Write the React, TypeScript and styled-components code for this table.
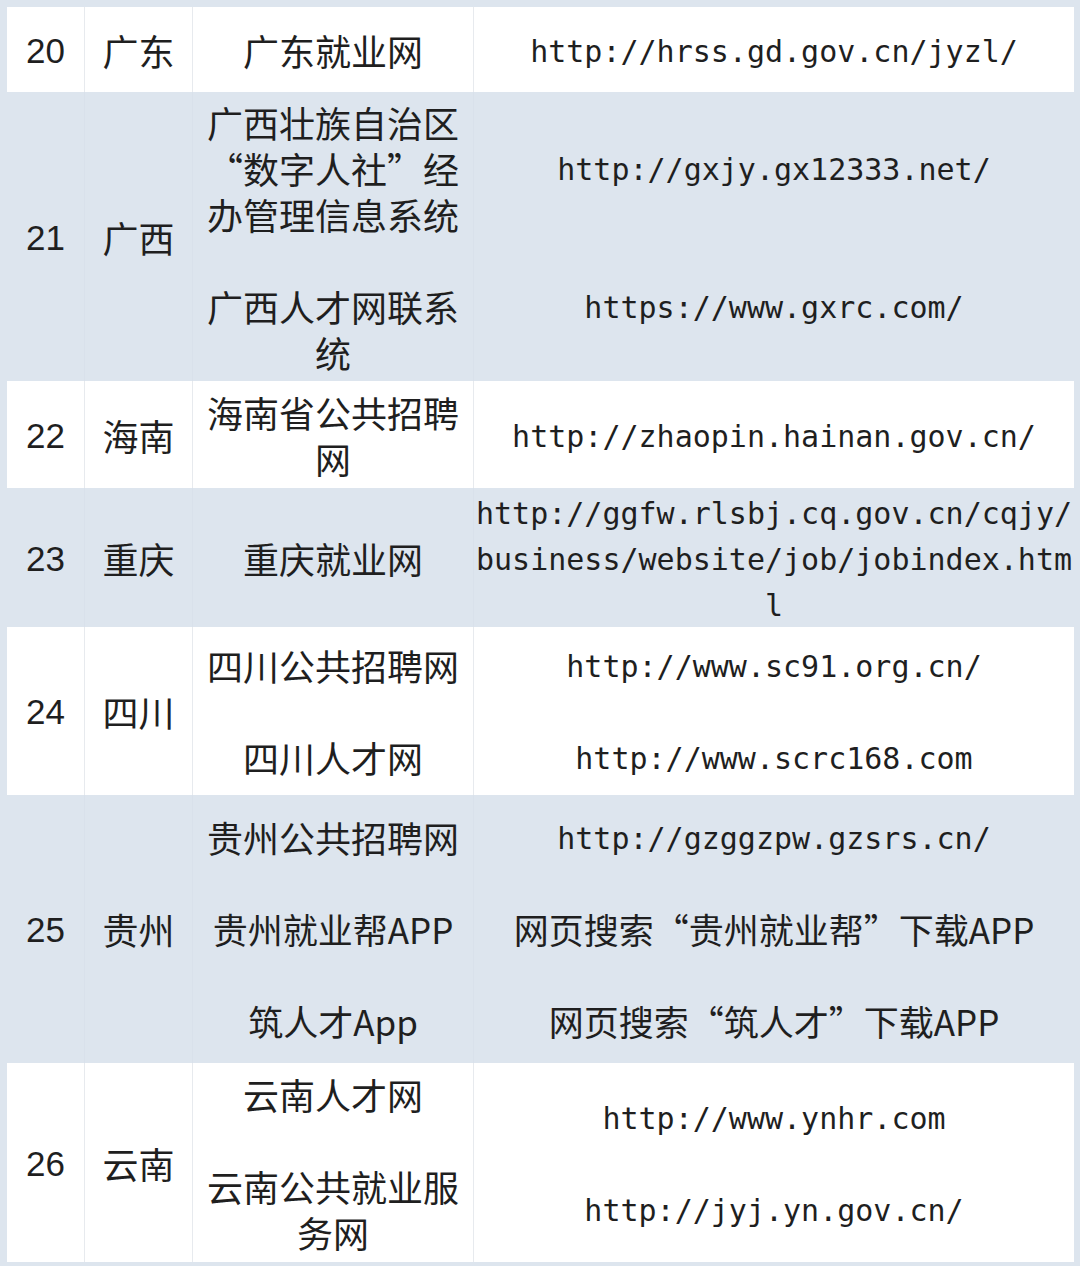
import React from 'react';
import styled, { createGlobalStyle } from 'styled-components';

const GlobalStyle = createGlobalStyle`
  html, body {
    margin: 0;
    padding: 0;
    background: #dde5ee;
  }
  body {
    font-family: "Noto Sans CJK SC", "Noto Sans", sans-serif;
    color: #1f1f1f;
  }
`;

// 整页（上、左、右各留一点底色）
const Page = styled.div`
  width: 1080px;
  height: 1266px;
  box-sizing: border-box;
  padding: 7px 6px 0 7px;
  background: #dde5ee;
  overflow: hidden;
`;

const Table = styled.div`
  display: flex;
  flex-direction: column;
`;

// 一个省份一行，白/蓝交替
const Row = styled.div<{ $h: number; $shaded: boolean }>`
  display: grid;
  grid-template-columns: 78px 108px 281px 600px;
  height: ${p => p.$h}px;
  background: ${p => (p.$shaded ? '#dde5ee' : '#ffffff')};
  --line: ${p => (p.$shaded ? '#d9e1eb' : '#e7eaee')};
`;

const Cell = styled.div`
  display: flex;
  flex-direction: column;
  align-items: center;
  justify-content: center;
  text-align: center;
  border-right: 1px solid var(--line);
  &:last-child {
    border-right: none;
  }
`;

const Num = styled.span`
  font-family: "Liberation Sans", Arial, sans-serif;
  font-size: 35px;
  line-height: 46px;
  padding-top: 2px;
`;

const Prov = styled.span`
  font-size: 36px;
  line-height: 46px;
`;

// 单元格里的一行文字（空行也占一行高度）
const Line = styled.span<{ $mono?: boolean; $small?: boolean }>`
  display: block;
  box-sizing: border-box;
  height: 46px;
  line-height: ${p => (p.$mono ? '42px' : '46px')};
  padding-top: ${p => (p.$mono ? '4px' : '0')};
  white-space: pre;
  font-family: ${p =>
    p.$mono
      ? '"DejaVu Sans Mono", "Liberation Mono", monospace'
      : '"Noto Sans CJK SC", "Noto Sans", sans-serif'};
  font-size: ${p => (p.$mono ? '30px' : p.$small ? '35px' : '36px')};
`;

type Entry = {
  no: string;
  prov: string;
  h: number;
  shaded: boolean;
  names: string[];
  urls: string[];
};

const rows: Entry[] = [
  { no: '20', prov: '广东', h: 85, shaded: false, names: ['广东就业网'], urls: ['http://hrss.gd.gov.cn/jyzl/'] },
  {
    no: '21', prov: '广西', h: 289, shaded: true,
    names: ['广西壮族自治区', '“数字人社”经', '办管理信息系统', '', '广西人才网联系', '统'],
    urls: ['http://gxjy.gx12333.net/', '', '', 'https://www.gxrc.com/'],
  },
  { no: '22', prov: '海南', h: 107, shaded: false, names: ['海南省公共招聘', '网'], urls: ['http://zhaopin.hainan.gov.cn/'] },
  {
    no: '23', prov: '重庆', h: 139, shaded: true,
    names: ['重庆就业网'],
    urls: ['http://ggfw.rlsbj.cq.gov.cn/cqjy/', 'business/website/job/jobindex.htm', 'l'],
  },
  {
    no: '24', prov: '四川', h: 168, shaded: false,
    names: ['四川公共招聘网', '', '四川人才网'],
    urls: ['http://www.sc91.org.cn/', '', 'http://www.scrc168.com'],
  },
  {
    no: '25', prov: '贵州', h: 268, shaded: true,
    names: ['贵州公共招聘网', '', '贵州就业帮APP', '', '筑人才App'],
    urls: ['http://gzggzpw.gzsrs.cn/', '', '网页搜索“贵州就业帮”下载APP', '', '网页搜索“筑人才”下载APP'],
  },
  {
    no: '26', prov: '云南', h: 199, shaded: false,
    names: ['云南人才网', '', '云南公共就业服', '务网'],
    urls: ['http://www.ynhr.com', '', 'http://jyj.yn.gov.cn/'],
  },
];

// 网址用等宽字体，中文说明用黑体；接续的 "l" 也算网址
const isMono = (s: string) => /^[\x20-\x7e]+$/.test(s);
// 中英混排（含 APP）的稍微小一点
const hasLatin = (s: string) => /[A-Za-z]/.test(s);

export default function App() {
  return (
    <>
      <GlobalStyle />
      <Page>
        <Table>
          {rows.map(r => (
            <Row key={r.no} $h={r.h} $shaded={r.shaded}>
              <Cell>
                <Num>{r.no}</Num>
              </Cell>
              <Cell>
                <Prov>{r.prov}</Prov>
              </Cell>
              <Cell>
                {r.names.map((n, i) => (
                  <Line key={i} $small={hasLatin(n)}>{n}</Line>
                ))}
              </Cell>
              <Cell>
                {r.urls.map((u, i) => (
                  <Line key={i} $mono={isMono(u)} $small={!isMono(u)}>{u}</Line>
                ))}
              </Cell>
            </Row>
          ))}
        </Table>
      </Page>
    </>
  );
}
